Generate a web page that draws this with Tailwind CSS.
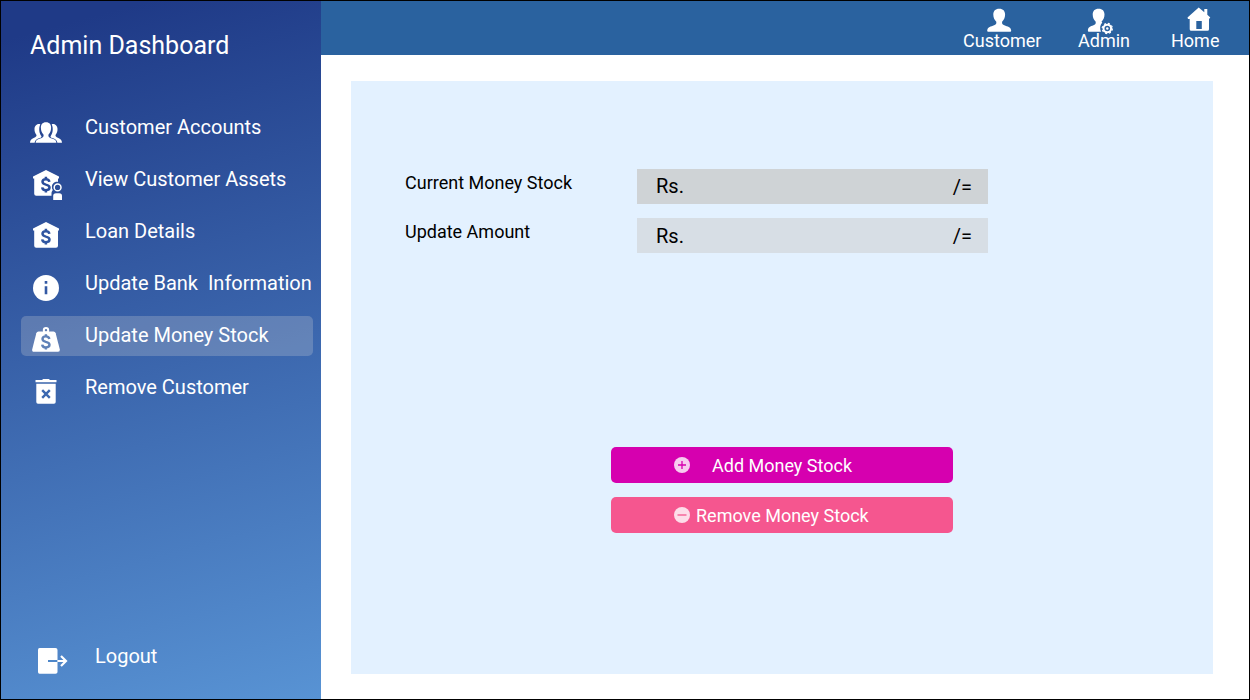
<!DOCTYPE html>
<html lang="en">
<head>
<meta charset="utf-8">
<title>Admin Dashboard</title>
<script src="https://cdn.jsdelivr.net/npm/@tailwindcss/browser@4"></script>
</head>
<body class="font-['Roboto',sans-serif]">
<div class="w-[1250px] h-[700px] border border-black flex bg-white overflow-hidden">
  <aside class="w-[320px] shrink-0 flex flex-col bg-[linear-gradient(165deg,#1f3a87_5%,#5893d4_100%)] text-white">
    <h1 class="mt-[29px] pl-[29px] h-8 leading-8 text-[25px] whitespace-nowrap">Admin Dashboard</h1>
    <nav class="mt-[46px] ml-5 w-[292px] flex flex-col gap-3 text-[20px] leading-[38px] whitespace-nowrap">
      <a class="flex h-10 pl-[9px] gap-[23px]">
        <svg class="w-8 h-10 shrink-0" viewBox="0 0 32 40" fill="#fff">
          <g transform="translate(0 3.480) scale(1 .9)">
          <path d="M10.300 14.200C8.500 13 4.600 14.500 4.500 19.300c-.1 2.600.5 4.900 2 6.800.1 1.500-.6 2.100-2.400 3.100C1.200 30.600.2 31.600 0 34.800H4.600C5 31.800 6.800 30.800 9.600 29.600 11.400 28.900 11.800 28.200 11.300 27.200 9.400 24.800 8.300 19 10.300 14.200z"/>
          <path d="M21.700 14.200C23.500 13 27.400 14.500 27.500 19.300c.1 2.600-.5 4.900-2 6.800-.1 1.500.6 2.100 2.400 3.100 2.900 1.400 3.900 2.400 4.100 5.600H27.400C27 31.800 25.200 30.800 22.400 29.600 20.600 28.900 20.200 28.200 20.700 27.200 22.600 24.800 23.700 19 21.700 14.200z"/>
          <path d="M16 12c-3.600 0-5.300 2.500-5.100 6.400.1 3 1 5.500 2.700 7.400.2 2.400-.6 3.200-3.500 4.300C7 31.200 5.800 32 5.600 34.800h20.800c-.2-2.800-1.400-3.600-4.500-4.700-2.900-1.100-3.700-1.900-3.500-4.300 1.700-1.900 2.600-4.400 2.700-7.400.2-3.900-1.500-6.400-5.100-6.400z"/>
          </g>
        </svg>
        <span>Customer Accounts</span>
      </a>
      <a class="flex h-10 pl-[9px] gap-[23px]">
        <svg class="w-8 h-10 shrink-0" viewBox="0 0 32 40" fill="#fff">
          <path d="M16 10L29 16.500V18.500H28V22C25 21.200 21.900 23.500 21.900 27c0 1.200.3 2.200.9 3-1 1.200-1.300 2.300-1.300 3.500V35.700H6.200a2 2 0 0 1-2-2V18.500H3V16.500z"/>
          <circle cx="27.600" cy="27.400" r="3.400" fill="none" stroke="#fff" stroke-width="1.500"/>
          <path d="M23.200 40V36a2.800 2.800 0 0 1 2.800-2.800H29.200a2.800 2.800 0 0 1 2.800 2.800V40z"/>
          <path d="M19.300 21.800c-.2-1.700-1.500-2.600-3.400-2.600s-3.400 1-3.400 2.600c0 1.800 1.400 2.300 3.400 2.800 2.300.5 3.600 1.200 3.600 3 0 1.700-1.500 2.600-3.600 2.600s-3.500-1-3.700-2.800M15.900 16.800v2.500M15.900 30v2.500" fill="none" stroke="#2a4d9a" stroke-width="2.500"/>
        </svg>
        <span>View Customer Assets</span>
      </a>
      <a class="flex h-10 pl-[9px] gap-[23px]">
        <svg class="w-8 h-10 shrink-0" viewBox="0 0 32 40" fill="#fff">
          <path d="M16 10L29 16.500V18.500H28V33.800a2 2 0 0 1-2 2H6.200a2 2 0 0 1-2-2V18.500H3V16.500z"/>
          <path d="M19.300 21.800c-.2-1.700-1.500-2.600-3.400-2.600s-3.400 1-3.400 2.600c0 1.800 1.400 2.300 3.400 2.800 2.300.5 3.600 1.200 3.600 3 0 1.700-1.500 2.600-3.600 2.600s-3.500-1-3.700-2.800M15.900 16.800v2.500M15.900 30v2.500" fill="none" stroke="#3056a1" stroke-width="2.500"/>
        </svg>
        <span>Loan Details</span>
      </a>
      <a class="flex h-10 pl-[9px] gap-[23px]">
        <svg class="w-8 h-10 shrink-0" viewBox="0 0 32 40">
          <circle cx="16" cy="24" r="13" fill="#fff"/>
          <path d="M14.700 17h2.600v2.700h-2.600zM14.700 22.300h2.600v7.900h-2.600z" fill="#3359a4"/>
        </svg>
        <span class="whitespace-pre">Update Bank  Information</span>
      </a>
      <a class="flex h-10 pl-[9px] gap-[23px] rounded-[5px] bg-[#d9d9d9]/25">
        <svg class="w-8 h-10 shrink-0" viewBox="0 0 32 40" fill="#fff">
          <path d="M8.500 15.500H23.500Q25.200 15.500 25.700 17.200L29.800 33.500Q30.200 35.800 28 35.800H4Q1.800 35.800 2.200 33.500L6.300 17.200Q6.800 15.500 8.500 15.500z"/>
          <circle cx="16" cy="14.200" r="2.200" fill="none" stroke="#fff" stroke-width="2"/>
          <path d="M19.300 23c-.2-1.700-1.500-2.600-3.400-2.600s-3.400 1-3.400 2.600c0 1.800 1.400 2.300 3.400 2.800 2.300.5 3.600 1.200 3.600 3 0 1.700-1.500 2.600-3.600 2.600s-3.500-1-3.700-2.800M15.900 18.200v2.500M15.900 31.200v2.300" fill="none" stroke="#6082b8" stroke-width="2.400"/>
        </svg>
        <span>Update Money Stock</span>
      </a>
      <a class="flex h-10 pl-[9px] gap-[23px]">
        <svg class="w-8 h-10 shrink-0" viewBox="0 0 32 40" fill="#fff">
          <path d="M5.500 11.900H12L13.200 11H18.800L20 11.900H26.500V14.200H5.500zM6.300 15.700H25.700V34Q25.700 35.800 24 35.800H8Q6.300 35.800 6.300 34z"/>
          <path d="M12.200 22.200L19.800 29.800M19.800 22.200L12.200 29.800" stroke="#3b68b0" stroke-width="2.400"/>
        </svg>
        <span>Remove Customer</span>
      </a>
    </nav>
    <a class="mt-auto mb-6 ml-[37px] flex h-[38px] gap-[27px] text-[20px] leading-[38px]">
      <svg class="w-[30px] h-[38px] shrink-0" viewBox="0 0 30 38">
        <path d="M1.500 11H17.500Q19.500 11 19.500 13V35Q19.500 36.800 17.500 36.800H1.500Q0 36.800 0 35V13Q0 11 1.500 11z" fill="#fff"/>
        <path d="M10 24H19.500" stroke="#4e87c9" stroke-width="2"/>
        <path d="M19.500 24H28M23 19L28 24L23 29" fill="none" stroke="#fff" stroke-width="2.200"/>
      </svg>
      <span>Logout</span>
    </a>
  </aside>
  <div class="flex-1 flex flex-col">
    <header class="h-[54px] bg-[#2a629f] text-white flex justify-end pr-[30px] text-[18px] leading-[22px] whitespace-nowrap">
      <a class="w-[79px] mr-[36px]">
        <svg class="block w-[79px] h-[29px] overflow-visible" viewBox="0 0 79 29" fill="#fff">
          <path d="M36.200 7.800c-4 0-5.900 2.300-5.900 5.700 0 3 1.300 5.600 3 7.300.4 2.300-.6 3-3.400 3.900C26.500 25.800 24.400 26.500 24.200 29.800q0 .9.900.9h22.200q.9 0 .9-.9c-.2-3.300-2.300-4-5.700-5.100-2.800-.9-3.800-1.600-3.400-3.900 1.700-1.700 3-4.300 3-7.300 0-3.400-1.900-5.700-5.900-5.700z"/>
        </svg>
        <span class="block">Customer</span>
      </a>
      <a class="w-[53px] mr-[40px]">
        <svg class="block w-[53px] h-[29px] overflow-visible" viewBox="0 0 53 29" fill="#fff">
          <path d="M20.600 7.800c-4 0-5.900 2.300-5.900 5.700 0 3 1.300 5.600 3 7.300.4 2.300-.6 3-3.400 3.900C11.400 25.700 10 26.500 9.900 29.800q0 .9.900.9H23C21.500 27.500 22 24 24.300 21.500L23.500 20.800c1.700-1.700 3-4.300 3-7.300 0-3.400-1.900-5.700-5.900-5.700z"/>
          <circle cx="29.300" cy="27.500" r="3.800" fill="none" stroke="#fff" stroke-width="2"/>
          <circle cx="29.300" cy="27.500" r="5.100" fill="none" stroke="#fff" stroke-width="1.200" stroke-dasharray="2.003 2.003"/>
          <circle cx="29.300" cy="27.500" r="1.200"/>
        </svg>
        <span class="block">Admin</span>
      </a>
      <a class="w-[48px]">
        <svg class="block w-[48px] h-[29px] overflow-visible" viewBox="0 0 48 29" fill="#fff">
          <path fill-rule="evenodd" d="M27.700 6.500L33.300 11.200V8H36.300V13.800L39.300 16.500L38 17.900V28.300Q38 29.800 36.500 29.800H20.200Q18.700 29.800 18.700 28.300V17.900H17L16.500 16.500zM25.300 20V28H30.800V20z"/>
        </svg>
        <span class="block">Home</span>
      </a>
    </header>
    <main class="ml-[30px] mt-[26px] w-[862px] h-[593px] bg-[#e3f1ff] text-black">
      <div class="pl-[54px] pt-[88px] flex">
        <div class="w-[232px] text-[18px] leading-[28px] whitespace-nowrap flex flex-col gap-[21px]">
          <span>Current Money Stock</span><span>Update Amount</span>
        </div>
        <div class="w-[351px] flex flex-col gap-[14px] text-[20px]">
          <div class="h-[35px] leading-[35px] bg-[#cfd3d6] flex justify-between pl-[19px] pr-4"><span>Rs.</span><span class="leading-[37px]">/=</span></div>
          <div class="h-[35px] leading-[37px] bg-[#d7dee5] flex justify-between pl-[19px] pr-4"><span>Rs.</span><span>/=</span></div>
        </div>
      </div>
      <div class="mt-[194px] ml-[260px] w-[342px] flex flex-col gap-[14px] text-white text-[18px] leading-[37px] whitespace-nowrap">
        <button class="h-9 rounded-[5px] bg-[#d600af] flex pl-[63px] gap-[22px]">
          <svg class="w-4 h-9" viewBox="0 0 16 36"><circle cx="8" cy="18" r="8" fill="#fff" fill-opacity=".8"/><path d="M8 14v8M4 18h8" stroke="#d600af" stroke-width="1.300"/></svg>
          <span>Add Money Stock</span>
        </button>
        <button class="h-9 rounded-[5px] bg-[#f5568f] flex pl-[63px] gap-[6px]">
          <svg class="w-4 h-9" viewBox="0 0 16 36"><circle cx="8" cy="18" r="8" fill="#fff" fill-opacity=".8"/><path d="M3.500 18h9" stroke="#f5568f" stroke-width="1.300"/></svg>
          <span>Remove Money Stock</span>
        </button>
      </div>
    </main>
  </div>
</div>
</body>
</html>
